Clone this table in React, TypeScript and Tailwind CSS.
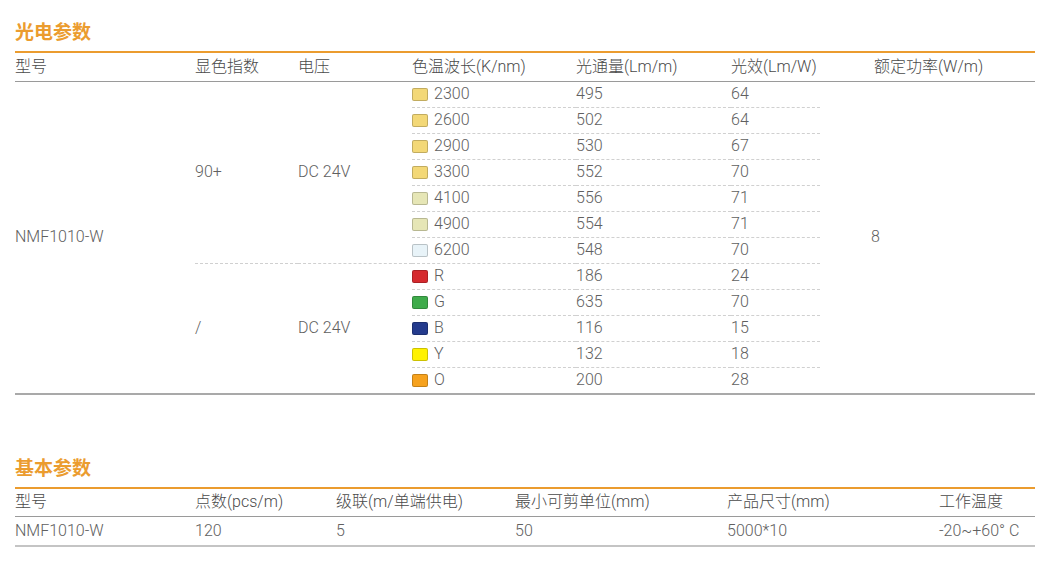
import React from "react";

type Row = { color: string; label: string; lm: string; eff: string };

const warm: Row[] = [
  { color: "bg-[#f3d877]", label: "2300", lm: "495", eff: "64" },
  { color: "bg-[#f3d877]", label: "2600", lm: "502", eff: "64" },
  { color: "bg-[#f3d877]", label: "2900", lm: "530", eff: "67" },
  { color: "bg-[#f3d877]", label: "3300", lm: "552", eff: "70" },
  { color: "bg-[#e6e6b6]", label: "4100", lm: "556", eff: "71" },
  { color: "bg-[#e6e6b6]", label: "4900", lm: "554", eff: "71" },
  { color: "bg-[#e8f3f8]", label: "6200", lm: "548", eff: "70" },
];

const rgb: Row[] = [
  { color: "bg-[#d52a2f]", label: "R", lm: "186", eff: "24" },
  { color: "bg-[#3fab4b]", label: "G", lm: "635", eff: "70" },
  { color: "bg-[#243b8d]", label: "B", lm: "116", eff: "15" },
  { color: "bg-[#fff200]", label: "Y", lm: "132", eff: "18" },
  { color: "bg-[#f6a21e]", label: "O", lm: "200", eff: "28" },
];

const dash = "border-b border-dashed border-[#d0d0d0]";

function RowCells({ row, last }: { row: Row; last: boolean }) {
  const b = last ? "" : dash;
  return (
    <>
      <td className={`${b} p-0`}>
        <div className="flex items-center">
          <span className={`mr-[6px] h-[13px] w-[16px] rounded-[2px] border border-black/20 ${row.color}`} />
          {row.label}
        </div>
      </td>
      <td className={`${b} p-0`}>{row.lm}</td>
      <td className={`${b} p-0`}>{row.eff}</td>
    </>
  );
}

function Title({ children }: { children: React.ReactNode }) {
  return (
    <div className="mb-[5px] h-[28px] text-[19px] font-bold leading-[30px] text-[#eb9c2f]">{children}</div>
  );
}

export default function App() {
  const all = [...warm, ...rgb];
  return (
    <div className="w-[1048px] bg-white px-[15px] pt-[18px] font-['Roboto','Noto_Sans_CJK_SC',sans-serif] text-[16px] font-light text-[#606060]">
      {/* 光电参数 */}
      <Title>光电参数</Title>
      <div className="w-[1020px] border-b-2 border-[#a9a9a9]">
        <table className="w-full table-fixed border-collapse border-t-2 border-[#eb9c2f]">
          <colgroup>
            <col className="w-[180px]" />
            <col className="w-[103px]" />
            <col className="w-[114px]" />
            <col className="w-[164px]" />
            <col className="w-[155px]" />
            <col className="w-[89px]" />
            <col className="w-[215px]" />
          </colgroup>
          <thead>
            <tr className="h-[29px] text-left text-[#4a4a4a]">
              <th className="border-b border-[#9a9a9a] p-0 font-light">型号</th>
              <th className="border-b border-[#9a9a9a] p-0 font-light">显色指数</th>
              <th className="border-b border-[#9a9a9a] p-0 font-light">电压</th>
              <th className="border-b border-[#9a9a9a] p-0 font-light">色温波长(K/nm)</th>
              <th className="border-b border-[#9a9a9a] p-0 font-light">光通量(Lm/m)</th>
              <th className="border-b border-[#9a9a9a] p-0 font-light">光效(Lm/W)</th>
              <th className="border-b border-[#9a9a9a] p-0 pl-[54px] font-light">额定功率(W/m)</th>
            </tr>
          </thead>
          <tbody>
            {all.map((row, i) => (
              <tr key={row.label} className="h-[26px]">
                {i === 0 && (
                  <td rowSpan={12} className="p-0">NMF1010-W</td>
                )}
                {i === 0 && (
                  <>
                    <td rowSpan={7} className={`${dash} p-0`}>90+</td>
                    <td rowSpan={7} className={`${dash} p-0`}>DC 24V</td>
                  </>
                )}
                {i === 7 && (
                  <>
                    <td rowSpan={5} className="p-0">/</td>
                    <td rowSpan={5} className="p-0">DC 24V</td>
                  </>
                )}
                <RowCells row={row} last={i === all.length - 1} />
                {i === 0 && (
                  <td rowSpan={12} className="p-0 pl-[51px]">8</td>
                )}
              </tr>
            ))}
          </tbody>
        </table>
      </div>

      {/* 基本参数 */}
      <div className="mt-[59px]">
        <Title>基本参数</Title>
        <div className="w-[1020px] border-b-2 border-[#c4c4c4]">
          <table className="w-full table-fixed border-collapse border-t-2 border-[#eb9c2f]">
            <colgroup>
              <col className="w-[180px]" />
              <col className="w-[141px]" />
              <col className="w-[179px]" />
              <col className="w-[212px]" />
              <col className="w-[212px]" />
              <col className="w-[96px]" />
            </colgroup>
            <thead>
              <tr className="h-[28px] text-left text-[#4a4a4a]">
                {["型号", "点数(pcs/m)", "级联(m/单端供电)", "最小可剪单位(mm)", "产品尺寸(mm)", "工作温度"].map((h) => (
                  <th key={h} className="border-b border-[#9a9a9a] p-0 font-light">{h}</th>
                ))}
              </tr>
            </thead>
            <tbody>
              <tr className="h-[29px]">
                {["NMF1010-W", "120", "5", "50", "5000*10", "-20~+60° C"].map((v) => (
                  <td key={v} className="p-0">{v}</td>
                ))}
              </tr>
            </tbody>
          </table>
        </div>
      </div>
    </div>
  );
}
